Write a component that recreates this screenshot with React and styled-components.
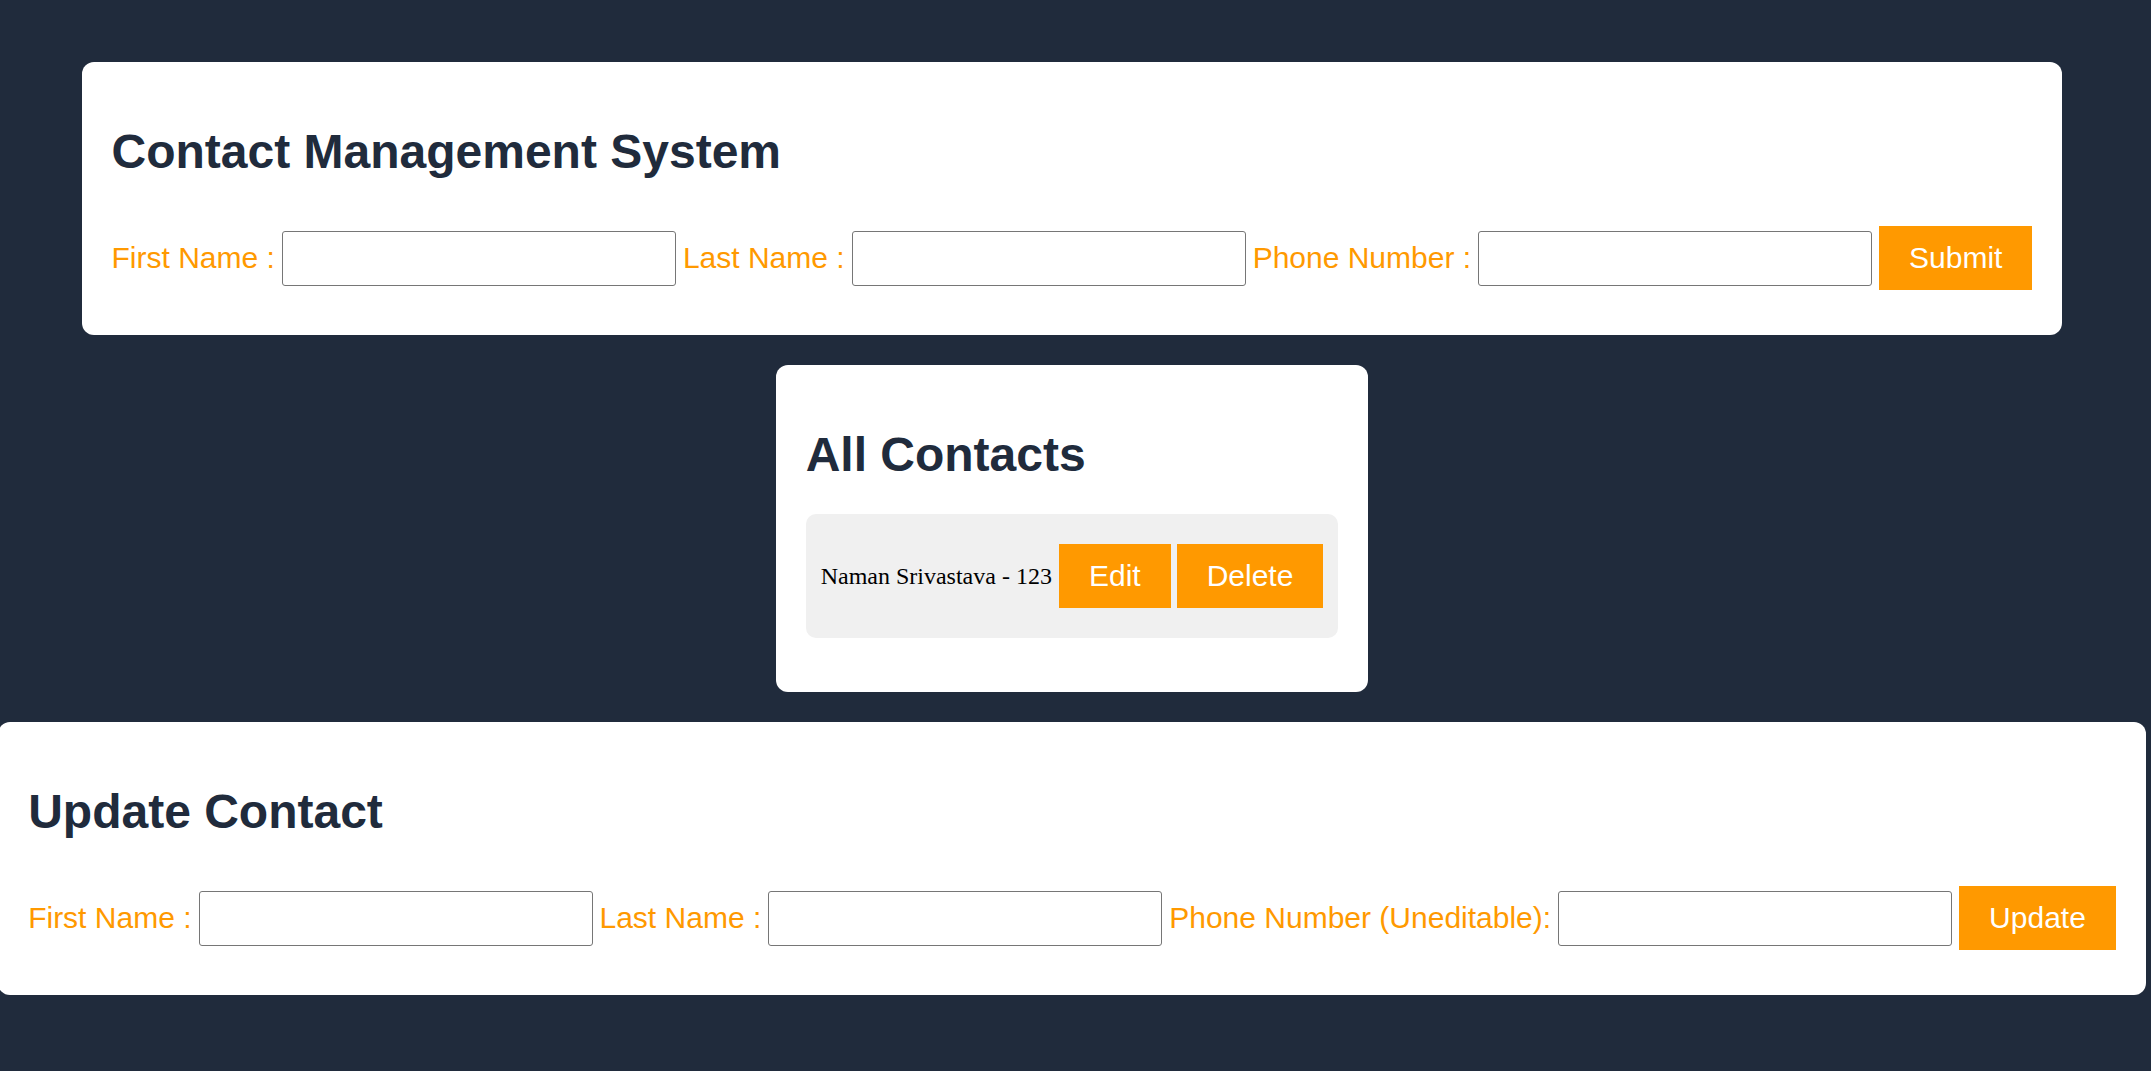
import React from "react";
import styled, { createGlobalStyle } from "styled-components";

const GlobalStyle = createGlobalStyle`
  html, body {
    margin: 0;
    padding: 0;
    background: #202b3c;
  }
  body {
    font-family: "Liberation Sans", Arial, sans-serif;
  }
`;

const Page = styled.div`
  display: flex;
  flex-direction: column;
  align-items: center;
  gap: 30px;
  padding: 62px 7px 75px 0;
  min-height: 100vh;
  box-sizing: border-box;
`;

const Card = styled.div`
  background: #ffffff;
  border-radius: 12px;
  padding: 30px;
  width: fit-content;
  box-sizing: border-box;
`;

const Title = styled.h1`
  font-family: "Liberation Sans", Arial, sans-serif;
  font-size: 48px;
  font-weight: 700;
  color: #202b3c;
  margin: 32px 0;
  line-height: normal;
`;

const Form = styled.form`
  display: flex;
  align-items: center;
  gap: 7px;
  margin: 0;
`;

const Label = styled.label`
  font-size: 30px;
  color: #ff9900;
  white-space: nowrap;
`;

const Input = styled.input`
  width: 394px;
  height: 55px;
  box-sizing: border-box;
  border: 1px solid #767676;
  border-radius: 3px;
  padding: 0 8px;
  font-size: 24px;
  background: #fff;
`;

const Button = styled.button`
  background: #ff9900;
  color: #ffffff;
  border: none;
  border-radius: 0;
  font-family: "Liberation Sans", Arial, sans-serif;
  font-size: 30px;
  line-height: 34px;
  padding: 15px 30px;
  margin: ${(p) => (p.$spaced ? "15px 0" : "0")};
  cursor: pointer;
  white-space: nowrap;
`;

const List = styled.ul`
  list-style: none;
  margin: 0 0 24px;
  padding: 0;
`;

const Item = styled.li`
  display: flex;
  align-items: center;
  gap: 6px;
  background: #f0f0f0;
  border-radius: 10px;
  padding: 30px 15px;
`;

const ItemText = styled.span`
  font-family: "Liberation Serif", "Times New Roman", serif;
  font-size: 24px;
  color: #000;
  margin-right: 1px;
  white-space: nowrap;
`;

const contacts = [{ first: "Naman", last: "Srivastava", phone: "123" }];

export default function App() {
  return (
    <>
      <GlobalStyle />
      <Page>
        <Card>
          <Title>Contact Management System</Title>
          <Form onSubmit={(e) => e.preventDefault()}>
            <Label>First Name :</Label>
            <Input type="text" />
            <Label>Last Name :</Label>
            <Input type="text" />
            <Label>Phone Number :</Label>
            <Input type="text" />
            <Button type="submit" $spaced>Submit</Button>
          </Form>
        </Card>

        <Card>
          <Title>All Contacts</Title>
          <List>
            {contacts.map((c) => (
              <Item key={c.phone}>
                <ItemText>
                  {c.first} {c.last} - {c.phone}
                </ItemText>
                <Button type="button">Edit</Button>
                <Button type="button">Delete</Button>
              </Item>
            ))}
          </List>
        </Card>

        <Card>
          <Title>Update Contact</Title>
          <Form onSubmit={(e) => e.preventDefault()}>
            <Label>First Name :</Label>
            <Input type="text" />
            <Label>Last Name :</Label>
            <Input type="text" />
            <Label>Phone Number (Uneditable):</Label>
            <Input type="text" readOnly />
            <Button type="submit" $spaced>Update</Button>
          </Form>
        </Card>
      </Page>
    </>
  );
}
